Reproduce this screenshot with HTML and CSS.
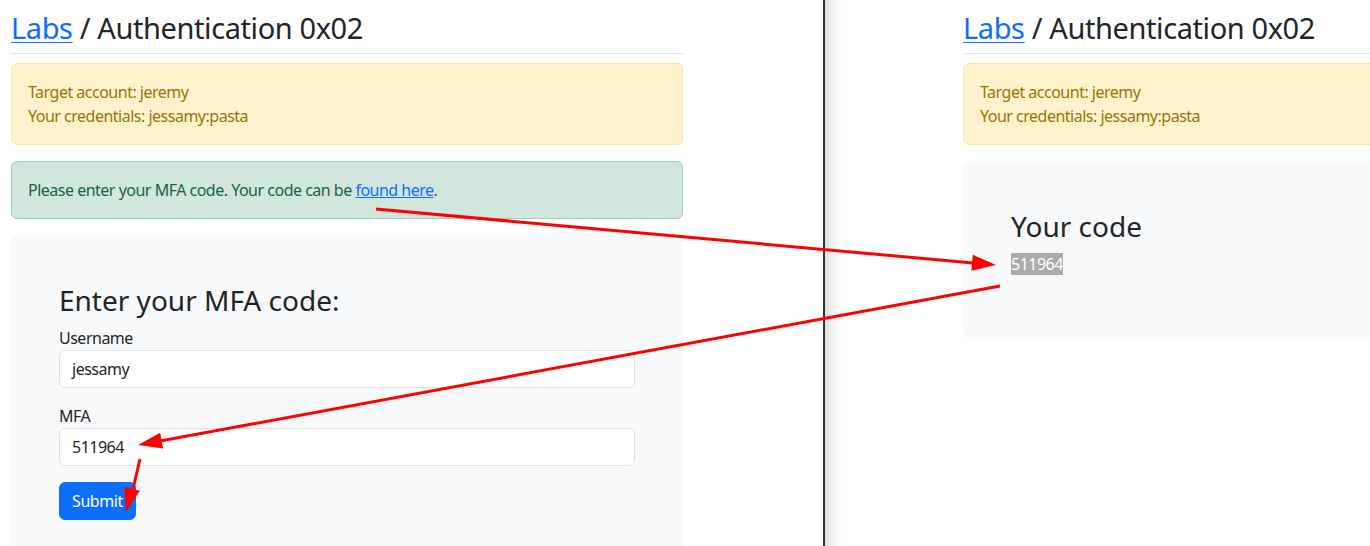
FILE: index.html
```html
<!DOCTYPE html>
<html lang="en">
<head>
<meta charset="utf-8">
<title>Labs / Authentication 0x02</title>
<link rel="stylesheet" href="styles.css">
</head>
<body>
<div class="screen">
  <section class="pane pane-left">
    <div class="page">
      <h2 class="title"><a href="#">Labs</a> / Authentication 0x02</h2>
      <div class="alert alert-warning">
        <div>Target account: jeremy</div>
        <div>Your credentials: jessamy:pasta</div>
      </div>
      <div class="alert alert-success">Please enter your MFA code. Your code can be <a href="#">found here</a>.</div>
      <div class="card card-tall">
        <h3 class="card-title">Enter your MFA code:</h3>
        <div class="field">
          <label class="label">Username</label>
          <div class="input">jessamy</div>
        </div>
        <div class="field">
          <label class="label">MFA</label>
          <div class="input">511964</div>
        </div>
        <button class="btn">Submit</button>
      </div>
    </div>
  </section>
  <div class="divider"></div>
  <section class="pane pane-right">
    <div class="page">
      <h2 class="title"><a href="#">Labs</a> / Authentication 0x02</h2>
      <div class="alert alert-warning">
        <div>Target account: jeremy</div>
        <div>Your credentials: jessamy:pasta</div>
      </div>
      <div class="card card-short">
        <h3 class="card-title">Your code</h3>
        <p class="code"><span class="selected">511964</span></p>
      </div>
    </div>
  </section>
</div>
<svg class="arrows" width="1370" height="546" viewBox="0 0 1370 546">
  <g stroke="#ff0000" stroke-width="3" fill="none" stroke-linecap="butt">
    <line x1="376" y1="209" x2="973" y2="263"/>
    <line x1="1000" y1="286" x2="160" y2="441"/>
    <line x1="140" y1="459" x2="133" y2="489"/>
  </g>
  <g fill="#ff0000">
    <polygon points="996,265 972.8,254.8 971.4,270.8"/>
    <polygon points="138,445 160.2,432.8 163.1,448.5"/>
    <polygon points="126,512 124.4,486.8 139.8,490.8"/>
  </g>
</svg>
</body>
</html>
```
FILE: styles.css
```css
* { box-sizing: border-box; }
html, body { margin: 0; padding: 0; }
body {
  font-family: "Noto Sans", "Open Sans", sans-serif;
  font-size: 16px;
  line-height: 24px;
  letter-spacing: -0.5px;
  color: #212529;
  background: #fff;
  width: 1370px;
  height: 546px;
  overflow: hidden;
  position: relative;
}
.screen {
  display: flex;
  height: 546px;
}
.pane {
  overflow: hidden;
  height: 546px;
}
.pane-left {
  width: 823px;
  flex: none;
  padding-left: 11px;
  background: #fff;
}
.divider {
  width: 2px;
  flex: none;
  background: #353535;
}
.pane-right {
  flex: 1;
  padding-left: 138px;
  background: linear-gradient(to right, #dcdcdc 0, #f4f4f4 8px, #fff 18px);
}
.page {
  width: 672px;
  padding-top: 10px;
}
.title {
  margin: 0 0 9px;
  font-size: 29px;
  line-height: 35px;
  font-weight: 400;
  letter-spacing: -0.4px;
  padding-bottom: 8px;
  border-bottom: 1px solid #dee2e6;
}
.title a { color: #0d6efd; text-decoration: underline; text-underline-offset: 3px; text-decoration-thickness: 1px; }
.alert {
  border: 1px solid transparent;
  border-radius: 6px;
  padding: 16px;
  margin-bottom: 16px;
}
.alert-warning {
  background: #fff3cd;
  border-color: #ffe69c;
  color: #997404;
}
.alert-success {
  background: #d1e7dd;
  border-color: #a3cfbb;
  color: #1c6343;
}
.alert-success a { color: #0d6efd; text-decoration: underline; }
.card {
  background: #f8f9fa;
  border-radius: 8px;
  padding: 49px 48px 47px;
}
.card-tall { min-height: 340px; }
.card-title {
  margin: 0 0 8px;
  font-size: 28px;
  line-height: 33.6px;
  font-weight: 400;
  letter-spacing: 0;
}
.field { margin-bottom: 16px; }
.label {
  display: block;
}
.input {
  height: 38px;
  background: #fff;
  border: 1px solid #dee2e6;
  border-radius: 6px;
  padding: 6px 12px;
}
.btn {
  font: inherit;
  letter-spacing: -0.4px;
  background: #0d6efd;
  color: #fff;
  border: 1px solid #0d6efd;
  border-radius: 6px;
  padding: 6px 12px;
  line-height: 24px;
}
.code { margin: 0 0 16px; }
.selected {
  background: #ababab;
  color: #fff;
}
.arrows {
  position: absolute;
  left: 0;
  top: 0;
  pointer-events: none;
}
```
